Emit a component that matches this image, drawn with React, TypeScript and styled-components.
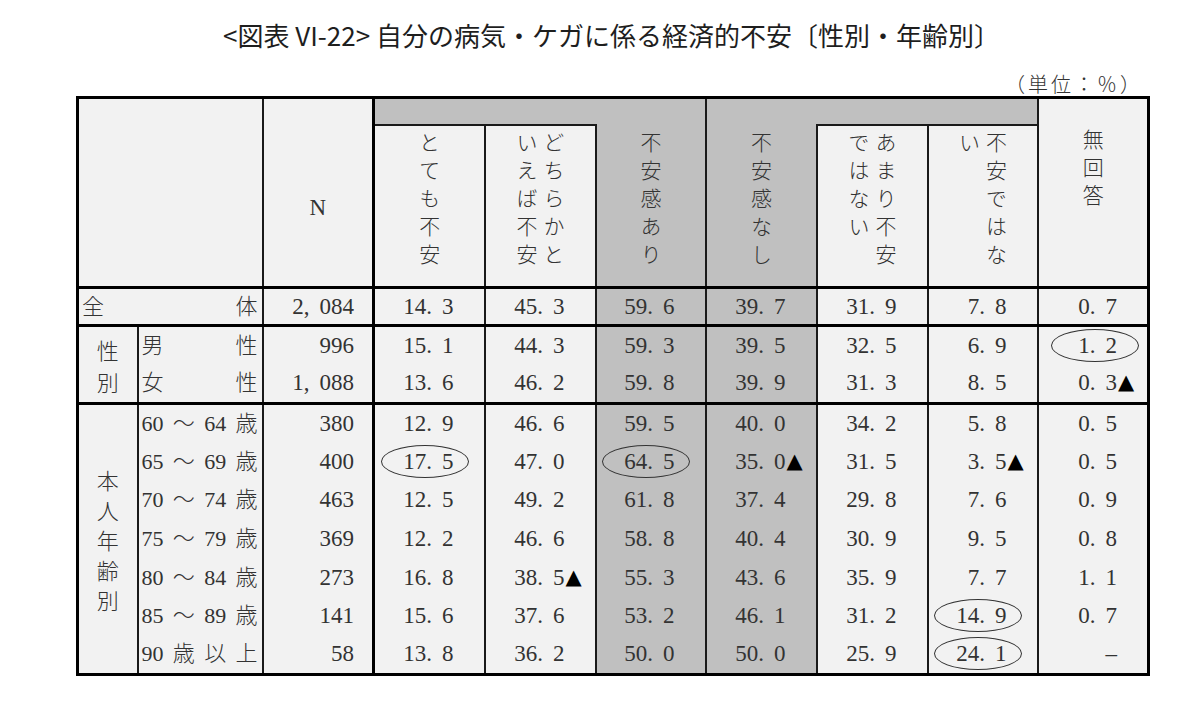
import React from 'react';
import styled, { createGlobalStyle, css } from 'styled-components';

const cellBg = '#f2f2f2';
const shadeBg = '#c0c0c0';
const thin = '2px solid #1a1a1a';
const thick = '3px solid #000';

const GlobalStyle = createGlobalStyle`
  html, body {
    margin: 0;
    padding: 0;
    background: #fff;
  }
  body {
    font-family: "Noto Sans CJK JP", sans-serif;
    color: #222;
  }
`;

const Page = styled.div`
  width: 1200px;
  height: 710px;
  box-sizing: border-box;
  padding: 17px 0 0 76px;
`;

const Figure = styled.div`
  width: 1071px;
  display: flex;
  flex-direction: column;
`;

const Title = styled.h1`
  margin: 0;
  font-family: "Noto Sans CJK JP", sans-serif;
  font-weight: 400;
  font-size: 26px;
  line-height: 36px;
  text-align: center;
  color: #1e1e1e;
`;

const Unit = styled.div`
  align-self: flex-end;
  margin: 19px 4px 0 0;
  font-family: "Noto Sans CJK JP", sans-serif;
  font-weight: 300;
  font-size: 20px;
  line-height: 24px;
  letter-spacing: 3px;
  color: #333;
`;

const Table = styled.table`
  border-collapse: collapse;
  table-layout: fixed;
  width: 1071px;
  border: ${thick};
  background: ${cellBg};
  color: #333;
`;

const Col = styled.col<{ $w: number }>`
  width: ${(p) => p.$w}px;
`;

const Row = styled.tr<{ $h: number; $groupStart?: boolean }>`
  height: ${(p) => p.$h}px;
  & > td {
    border-top: ${(p) => (p.$groupStart ? thick : 'none')};
  }
`;

const CornerCell = styled.th`
  padding: 0;
  border-right: ${thin};
  border-bottom: ${thick};
`;

const NHead = styled.th`
  padding: 30px 0 0;
  vertical-align: middle;
  font-family: "Liberation Serif", serif;
  font-weight: 400;
  font-size: 23px;
  border-left: ${thin};
  border-right: ${thick};
  border-bottom: ${thick};
`;

const BandCell = styled.th<{ $open: 'left' | 'right' }>`
  padding: 0;
  background: ${shadeBg};
  border-bottom: ${thin};
  border-left: ${(p) => (p.$open === 'left' ? 'none' : thin)};
  border-right: ${(p) => (p.$open === 'right' ? 'none' : thin)};
`;

const HeadCell = styled.th<{ $shade?: boolean; $pad?: number; $open?: 'left' | 'right' }>`
  padding: ${(p) => p.$pad ?? 6}px 0 0;
  vertical-align: top;
  text-align: center;
  font-weight: 400;
  background: ${(p) => (p.$shade ? shadeBg : cellBg)};
  border-top: ${thin};
  border-bottom: ${thick};
  border-left: ${(p) => (p.$open === 'left' ? 'none' : thin)};
  border-right: ${(p) => (p.$open === 'right' ? 'none' : thin)};
`;

const VText = styled.div`
  display: inline-block;
  writing-mode: vertical-rl;
  font-family: "Noto Sans CJK JP", sans-serif;
  font-weight: 300;
  font-size: 21px;
  line-height: 27px;
  letter-spacing: 7px;
  text-align: start;
  color: #333;
`;

const LabelCell = styled.td`
  padding: 0 4px 0 3px;
  vertical-align: middle;
  font-family: "Liberation Serif", "Noto Sans CJK JP", serif;
  font-weight: 300;
  font-size: 22px;
  line-height: 24px;
  border-left: ${thin};
  border-right: ${thin};
`;

const Spread = styled.div`
  display: flex;
  justify-content: space-between;
  align-items: center;
`;

const GroupCell = styled.td`
  padding: 0;
  vertical-align: middle;
  border-right: ${thin};
`;

const GroupLabel = styled.div<{ $gap: number }>`
  display: flex;
  flex-direction: column;
  align-items: center;
  gap: ${(p) => p.$gap}px;
  font-family: "Noto Sans CJK JP", sans-serif;
  font-weight: 300;
  font-size: 22px;
  line-height: 22px;
`;

const NumCell = styled.td<{ $shade?: boolean; $pad?: number; $thickRight?: boolean }>`
  padding: 0 ${(p) => p.$pad ?? 30}px 0 0;
  text-align: right;
  vertical-align: middle;
  white-space: nowrap;
  font-family: "Liberation Serif", "Noto Sans CJK JP", serif;
  font-size: 23px;
  line-height: 24px;
  background: ${(p) => (p.$shade ? shadeBg : cellBg)};
  border-left: ${thin};
  border-right: ${(p) => (p.$thickRight ? thick : thin)};
`;

const Value = styled.span<{ $circled?: boolean }>`
  position: relative;
  display: inline-block;
  ${(p) =>
    p.$circled &&
    css`
      &::before {
        content: '';
        position: absolute;
        left: 50%;
        top: 50%;
        width: 88px;
        height: 33px;
        margin: -17px 0 0 -47px;
        box-sizing: border-box;
        border: 1.5px solid #333;
        border-radius: 50%;
      }
    `}
`;

const Sep = styled.span`
  margin-right: 10px;
`;

const Mark = styled.span`
  position: absolute;
  left: 100%;
  bottom: 3px;
  margin-left: 1px;
  font-family: "DejaVu Sans", sans-serif;
  font-size: 21px;
  line-height: 20px;
  color: #000;
`;

const DATA_COLS = [false, false, true, true, false, false, false];

type DataRow = { label: string[]; n: string; v: string[] };

const total: DataRow = { label: ['全', '体'], n: '2,084', v: ['14.3', '45.3', '59.6', '39.7', '31.9', '7.8', '0.7'] };

const bySex: DataRow[] = [
  { label: ['男', '性'], n: '996', v: ['15.1', '44.3', '59.3', '39.5', '32.5', '6.9', '*1.2'] },
  { label: ['女', '性'], n: '1,088', v: ['13.6', '46.2', '59.8', '39.9', '31.3', '8.5', '0.3^'] },
];

const byAge: DataRow[] = [
  { label: ['60', '～', '64', '歳'], n: '380', v: ['12.9', '46.6', '59.5', '40.0', '34.2', '5.8', '0.5'] },
  { label: ['65', '～', '69', '歳'], n: '400', v: ['*17.5', '47.0', '*64.5', '35.0^', '31.5', '3.5^', '0.5'] },
  { label: ['70', '～', '74', '歳'], n: '463', v: ['12.5', '49.2', '61.8', '37.4', '29.8', '7.6', '0.9'] },
  { label: ['75', '～', '79', '歳'], n: '369', v: ['12.2', '46.6', '58.8', '40.4', '30.9', '9.5', '0.8'] },
  { label: ['80', '～', '84', '歳'], n: '273', v: ['16.8', '38.5^', '55.3', '43.6', '35.9', '7.7', '1.1'] },
  { label: ['85', '～', '89', '歳'], n: '141', v: ['15.6', '37.6', '53.2', '46.1', '31.2', '*14.9', '0.7'] },
  { label: ['90', '歳', '以', '上'], n: '58', v: ['13.8', '36.2', '50.0', '50.0', '25.9', '*24.1', '–'] },
];

const Num = ({ raw }: { raw: string }) => {
  const circled = raw.startsWith('*');
  const marked = raw.endsWith('^');
  const text = raw.replace(/^\*/, '').replace(/\^$/, '');
  return (
    <Value $circled={circled}>
      {text.split(/([.,])/).map((part, i) =>
        part === '.' || part === ',' ? <Sep key={i}>{part}</Sep> : <React.Fragment key={i}>{part}</React.Fragment>
      )}
      {marked && <Mark>▲</Mark>}
    </Value>
  );
};

const Cells = ({ row }: { row: DataRow }) => (
  <>
    <LabelCell colSpan={row === total ? 2 : 1}>
      <Spread>
        {row.label.map((s, i) => (
          <span key={i}>{s}</span>
        ))}
      </Spread>
    </LabelCell>
    <NumCell $pad={18} $thickRight>
      <Num raw={row.n} />
    </NumCell>
    {row.v.map((v, i) => (
      <NumCell key={i} $shade={DATA_COLS[i]}>
        <Num raw={v} />
      </NumCell>
    ))}
  </>
);

const App = () => {
  return (
    <Page>
      <GlobalStyle />
      <Figure>
        <Title>&lt;図表 VI-22&gt; 自分の病気・ケガに係る経済的不安〔性別・年齢別〕</Title>
        <Unit>（単位：％）</Unit>
        <Table>
          <colgroup>
            <Col $w={60} />
            <Col $w={125} />
            <Col $w={111} />
            <Col $w={111} />
            <Col $w={111} />
            <Col $w={110} />
            <Col $w={111} />
            <Col $w={111} />
            <Col $w={110} />
            <Col $w={111} />
          </colgroup>
          <thead>
            <Row $h={27}>
              <CornerCell colSpan={2} rowSpan={2} />
              <NHead rowSpan={2}>N</NHead>
              <BandCell colSpan={2} $open="right" />
              <HeadCell rowSpan={2} $shade $pad={33} $open="left">
                <VText>不安感あり</VText>
              </HeadCell>
              <HeadCell rowSpan={2} $shade $pad={33} $open="right">
                <VText>不安感なし</VText>
              </HeadCell>
              <BandCell colSpan={2} $open="left" />
              <HeadCell rowSpan={2} $pad={30}>
                <VText>無回答</VText>
              </HeadCell>
            </Row>
            <Row $h={163}>
              <HeadCell>
                <VText>とても不安</VText>
              </HeadCell>
              <HeadCell>
                <VText>
                  どちらかと
                  <br />
                  いえば不安
                </VText>
              </HeadCell>
              <HeadCell>
                <VText>
                  あまり不安
                  <br />
                  ではない
                </VText>
              </HeadCell>
              <HeadCell>
                <VText>
                  不安ではな
                  <br />い
                </VText>
              </HeadCell>
            </Row>
          </thead>
          <tbody>
            <Row $h={38} $groupStart>
              <Cells row={total} />
            </Row>
            {bySex.map((row, i) => (
              <Row key={i} $h={39} $groupStart={i === 0}>
                {i === 0 && (
                  <GroupCell rowSpan={bySex.length}>
                    <GroupLabel $gap={10}>
                      <span>性</span>
                      <span>別</span>
                    </GroupLabel>
                  </GroupCell>
                )}
                <Cells row={row} />
              </Row>
            ))}
            {byAge.map((row, i) => (
              <Row key={i} $h={38.7} $groupStart={i === 0}>
                {i === 0 && (
                  <GroupCell rowSpan={byAge.length}>
                    <GroupLabel $gap={8}>
                      {['本', '人', '年', '齢', '別'].map((c) => (
                        <span key={c}>{c}</span>
                      ))}
                    </GroupLabel>
                  </GroupCell>
                )}
                <Cells row={row} />
              </Row>
            ))}
          </tbody>
        </Table>
      </Figure>
    </Page>
  );
};

export default App;
